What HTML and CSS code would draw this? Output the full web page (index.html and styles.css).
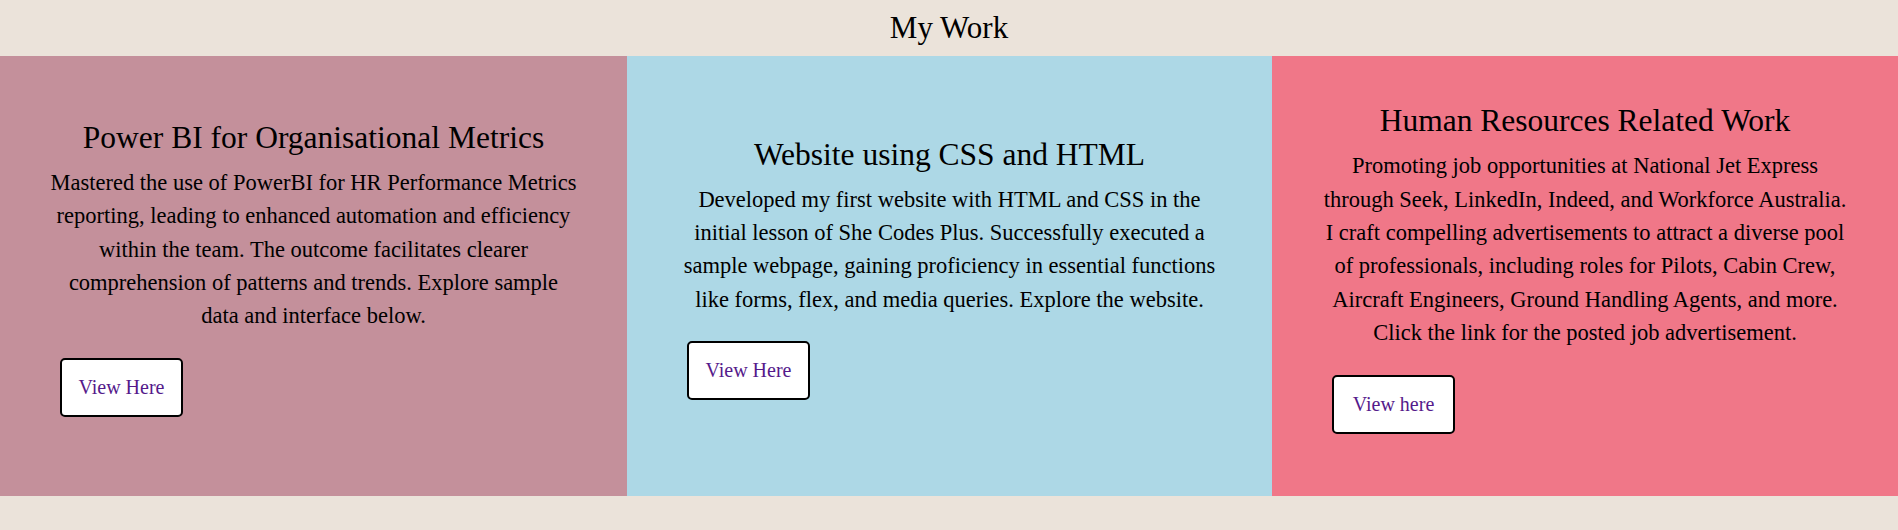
FILE: index.html
```html
<!DOCTYPE html>
<html lang="en">
<head>
<meta charset="utf-8">
<title>My Work</title>
<link rel="stylesheet" href="styles.css">
</head>
<body>
<header class="page-header">
  <h1 class="page-title">My Work</h1>
</header>
<section class="work">
  <article class="card card-powerbi">
    <div class="card-body">
      <h2 class="card-title">Power BI for Organisational Metrics</h2>
      <p class="card-text">Mastered the use of PowerBI for HR Performance Metrics reporting, leading to enhanced automation and efficiency within the team. The outcome facilitates clearer comprehension of patterns and trends. Explore sample data and interface below.</p>
      <div class="card-actions"><a class="btn" href="#">View Here</a></div>
    </div>
  </article>
  <article class="card card-web">
    <div class="card-body">
      <h2 class="card-title">Website using CSS and HTML</h2>
      <p class="card-text">Developed my first website with HTML and CSS in the initial lesson of She Codes Plus. Successfully executed a sample webpage, gaining proficiency in essential functions like forms, flex, and media queries. Explore the website.</p>
      <div class="card-actions"><a class="btn" href="#">View Here</a></div>
    </div>
  </article>
  <article class="card card-hr">
    <div class="card-body">
      <h2 class="card-title">Human Resources Related Work</h2>
      <p class="card-text">Promoting job opportunities at National Jet Express through Seek, LinkedIn, Indeed, and Workforce Australia. I craft compelling advertisements to attract a diverse pool of professionals, including roles for Pilots, Cabin Crew, Aircraft Engineers, Ground Handling Agents, and more. Click the link for the posted job advertisement.</p>
      <div class="card-actions"><a class="btn" href="#">View here</a></div>
    </div>
  </article>
</section>
</body>
</html>
```
FILE: styles.css
```css
html, body {
  margin: 0;
  padding: 0;
}

body {
  background: #ebe3da;
  color: #000;
  font-family: "Liberation Serif", "Times New Roman", serif;
}

.page-header {
  height: 56px;
  display: flex;
  justify-content: center;
  align-items: center;
}

.page-title {
  margin: 0;
  font-size: 31px;
  font-weight: normal;
  line-height: 56px;
}

.work {
  display: grid;
  grid-template-columns: 627px 645px 1fr;
  height: 440px;
}

.card {
  display: flex;
  align-items: center;
}

.card-powerbi { background: #c4909b; }
.card-web { background: #add8e6; }
.card-hr { background: #f07788; }

.card-body {
  width: 100%;
  padding: 0 48px;
  text-align: center;
}

.card-title {
  margin: 0 0 10px;
  font-size: 31.5px;
  font-weight: normal;
  line-height: 36px;
}

.card-text {
  margin: 0;
  font-size: 22.5px;
  line-height: 33.33px;
}

.card-actions {
  text-align: left;
  margin: 25.6px 0 15px;
  padding-left: 12px;
}

.btn {
  display: inline-block;
  box-sizing: border-box;
  width: 123px;
  background: #fff;
  border: 2px solid #000;
  border-radius: 5px;
  padding: 16px 0;
  font-size: 20px;
  line-height: 23px;
  text-align: center;
  color: #551a8b;
  text-decoration: none;
}
```
